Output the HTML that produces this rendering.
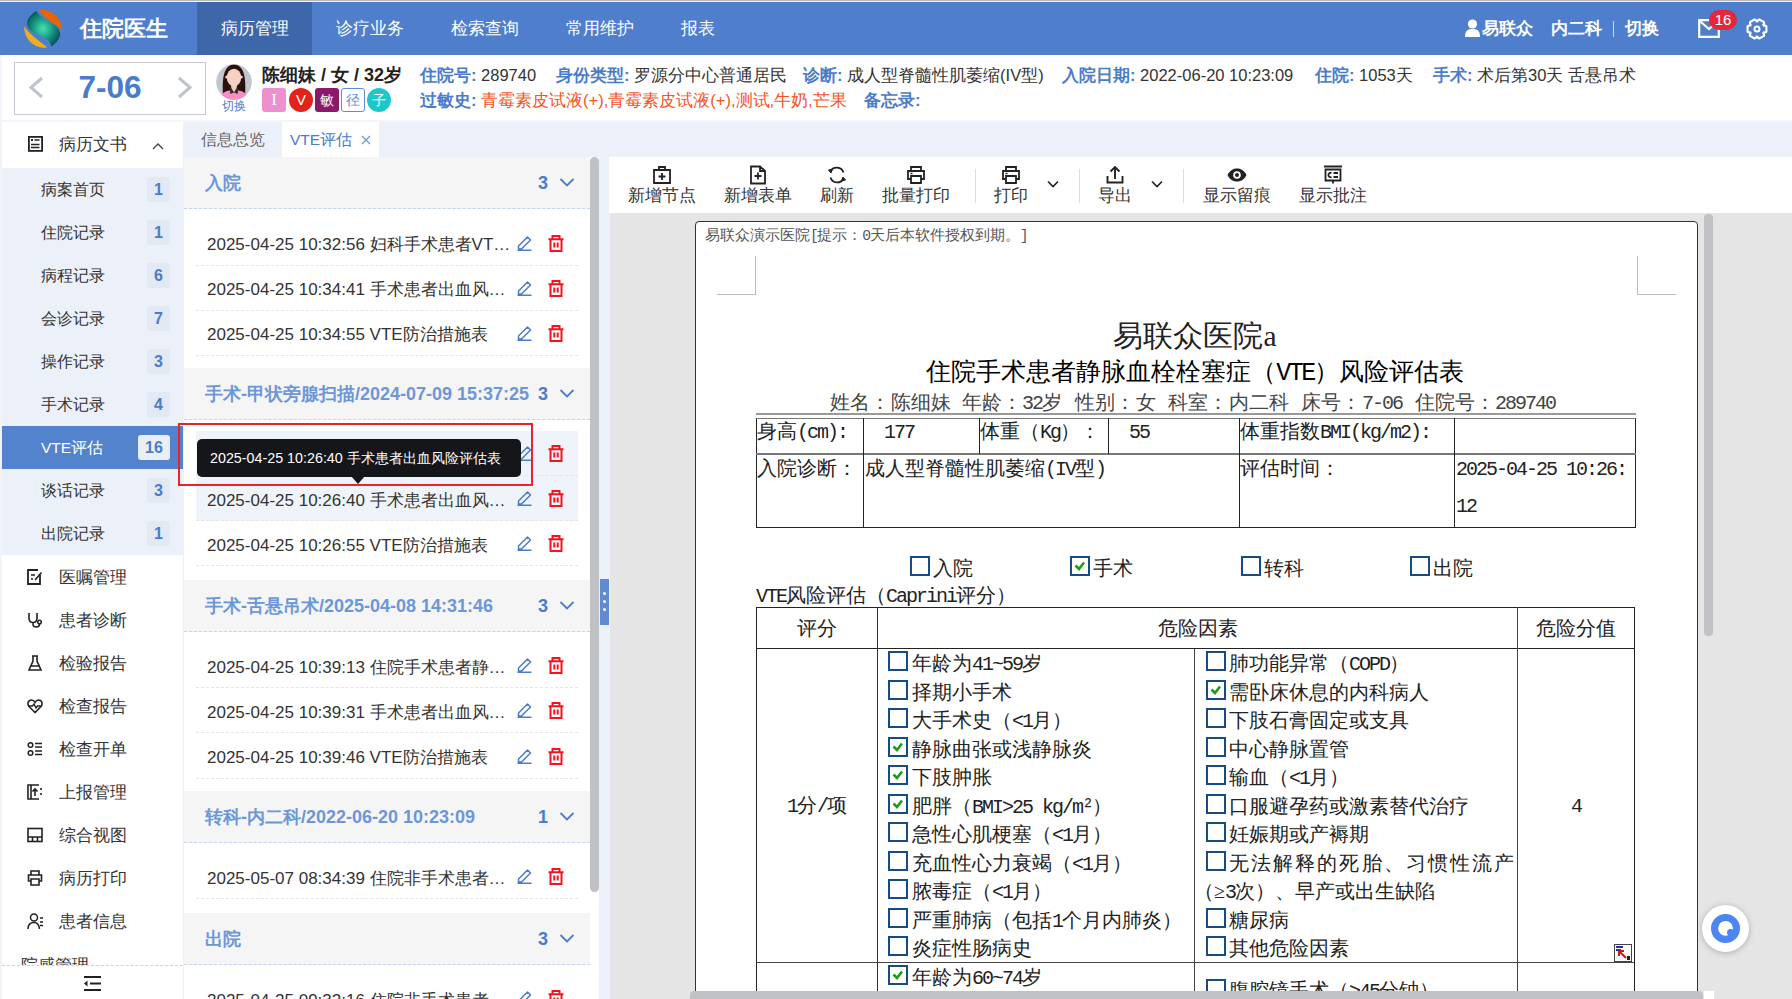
<!DOCTYPE html>
<html><head><meta charset="utf-8">
<style>
*{box-sizing:border-box;margin:0;padding:0}
html,body{width:1792px;height:999px;overflow:hidden;background:#eef2f9;font-family:"Liberation Sans",sans-serif;color:#333;position:relative}
.a{position:absolute;white-space:nowrap}
#topline{left:0;top:0;width:1792px;height:1px;background:#b9b9b9}
#hdr{left:0;top:2px;width:1792px;height:53px;background:#4f7fcc}
.nav{top:0;height:53px;line-height:53px;color:#fff;font-size:17px;text-align:center}
.hr{top:0;line-height:53px;color:#fff;font-size:17px;font-weight:bold}
#pbar{left:2px;top:55px;width:1790px;height:65px;background:#fff}
.pi{font-size:16.5px;color:#333;line-height:20px}
.lbl{color:#4a7cc9;font-weight:bold}
.tag{top:33px;width:24px;height:24px;line-height:24px;text-align:center;color:#fff;font-size:15px}
/* sidebar */
#side{left:2px;top:122px;width:181px;height:877px;background:#fff;overflow:hidden}
.sm{left:0;width:181px;height:43px;line-height:43px;font-size:15.5px;color:#333;background:#ecf1f9}
.sm span.t{position:absolute;left:39px;top:0}
.sm span.b{position:absolute;left:145px;top:9px;width:23px;height:25px;line-height:25px;text-align:center;background:#e2e8f4;color:#4a7cc9;font-weight:bold;border-radius:3px;font-size:16px}
.mi{left:0;width:181px;height:43px;line-height:43px;font-size:17px;color:#333}
.mi span.t{position:absolute;left:57px;top:1px}
.mi svg{position:absolute;left:25px;top:14px}
/* tabs */
#tabs{left:184px;top:122px;width:1608px;height:35px;background:#ecf1f9}
/* list */
#list{left:184px;top:157px;width:406px;height:842px;background:#fff;overflow:hidden}
.gh{left:0;width:406px;height:52px;background:#f5f5f5;border-bottom:1px dashed #c5d4ee}
.gh .t{position:absolute;left:21px;top:0;line-height:52px;font-size:18px;font-weight:bold;color:#6b97da}
.gh .n{position:absolute;left:354px;top:0;line-height:52px;font-size:18px;font-weight:bold;color:#4a7cc9}
.gh svg{position:absolute;left:375px;top:20px}
.it{left:12px;width:382px;height:45px;border-bottom:1px dashed #e6e6e6}
.it .t{position:absolute;left:11px;top:1.5px;line-height:45px;font-size:17px;color:#333}
.it .e{position:absolute;left:321px;top:15px}
.it .d{position:absolute;left:352px;top:14px}
/* toolbar */
#tool{left:609px;top:157px;width:1183px;height:56px;background:#fff}
.tb{top:0;height:56px;text-align:center;font-size:17px;color:#333}
.tb svg{position:absolute;left:50%;margin-left:-10px;top:8px}
.tb span{position:absolute;left:0;right:0;top:29px;line-height:20px}
.sep{top:12px;width:1px;height:34px;background:#dcdcdc}
#doc{left:610px;top:213px;width:1182px;height:786px;background:#e5e5e5;overflow:hidden}
#page{left:85px;top:8px;width:1003px;height:900px;background:#fff;border:1.5px solid #333;border-radius:4px 4px 0 0}
.ser{font-family:"Liberation Serif",serif}
.mono{font-family:"Liberation Mono",monospace}
.dt{font-family:"Liberation Serif",serif}
.dt .m{font-family:"Liberation Mono",monospace;letter-spacing:-0.1em}
.cb{position:absolute;width:20px;height:20px;border:2.7px solid #154c85;background:#fff}
</style></head><body>
<svg width="0" height="0" style="position:absolute"><defs>
<symbol id="chev" viewBox="0 0 16 11"><path d="M1.5,2 L8,8.5 L14.5,2" fill="none" stroke="#4a7cc9" stroke-width="1.8"/></symbol>
<symbol id="ied" viewBox="0 0 15 15"><path d="M1.5,13 V10 L10.5,1 L13.5,4 L4.5,13 Z M0.5,14.2 H14.5" fill="none" stroke="#4a7cc9" stroke-width="1.5" stroke-linejoin="round"/></symbol>
<symbol id="idel" viewBox="0 0 16 17"><path d="M0.5,4.3 H15.5 M4.5,4.3 V1 H11.5 V4.3 M2.5,4.3 V16 H13.5 V4.3 M6.3,7.5 V12.5 M9.7,7.5 V12.5" fill="none" stroke="#f5141e" stroke-width="2"/></symbol>
</defs></svg>
<div class="a" id="topline"></div>
<div class="a" id="hdr">
  <svg class="a" style="left:24px;top:7px" width="40" height="40" viewBox="0 0 40 40">
    <defs><radialGradient id="lg" cx="0.48" cy="0.5" r="0.55"><stop offset="0" stop-color="#43e3b6"/><stop offset="0.55" stop-color="#17967e"/><stop offset="1" stop-color="#04535b"/></radialGradient></defs>
    <path d="M15,1 C25,-0.5 37.5,7 38.3,21.2 C33,15.5 20,10.5 15,1 Z" fill="#ec6300"/>
    <path d="M0.2,17 C5,25.5 15,31 23.2,38.6 C11,40 0,31 0.2,17 Z" fill="#f0ad1c"/>
    <path d="M12.5,2 C15,8 24,12 30,15.5 C36,19.5 37,25 35.5,28 C34,32 30.5,35.5 27,37.5 C27,32 22,29 16,26.5 C10,24 5.5,22 3.5,17 C2,12 5,6 12.5,2 Z" fill="url(#lg)"/>
  </svg>
  <div class="a" style="left:80px;top:0;height:53px;line-height:53px;color:#fff;font-size:22px;font-weight:bold">住院医生</div>
  <div class="a nav" style="left:197px;width:115px;background:#3e67a9">病历管理</div>
  <div class="a nav" style="left:312px;width:115px">诊疗业务</div>
  <div class="a nav" style="left:427px;width:115px">检索查询</div>
  <div class="a nav" style="left:542px;width:115px">常用维护</div>
  <div class="a nav" style="left:657px;width:82px">报表</div>
  <svg class="a" style="left:1465px;top:17px" width="15" height="18" viewBox="0 0 15 18"><circle cx="7.5" cy="5" r="4.6" fill="#fff"/><path d="M0,18 C0,11 3,10 7.5,10 C12,10 15,11 15,18 Z" fill="#fff"/></svg>
  <div class="a hr" style="left:1482px">易联众</div>
  <div class="a hr" style="left:1551px">内二科</div>
  <div class="a" style="left:1613px;top:19px;width:1px;height:16px;background:#c9d7ef"></div>
  <div class="a hr" style="left:1625px">切换</div>
  <svg class="a" style="left:1698px;top:17px" width="22" height="19" viewBox="0 0 22 19"><path d="M1.2,1.2 H20.8 V17.8 H1.2 Z M1.2,1.5 L11,10 L20.8,1.5" fill="none" stroke="#fff" stroke-width="2.2"/></svg>
  <div class="a" style="left:1709px;top:8px;width:28px;height:20px;border-radius:10px;background:#e2283a;color:#fff;font-size:15px;line-height:20px;text-align:center">16</div>
  <svg class="a" style="left:1745.5px;top:15.5px" width="22" height="22" viewBox="0 0 22 22"><path d="M17.27,6.71 L20.42,8.29 L20.42,13.71 L17.27,15.29 L17.85,14.29 L18.05,17.80 L13.36,20.51 L10.42,18.58 L11.58,18.58 L8.64,20.51 L3.95,17.80 L4.15,14.29 L4.73,15.29 L1.58,13.71 L1.58,8.29 L4.73,6.71 L4.15,7.71 L3.95,4.20 L8.64,1.49 L11.58,3.42 L10.42,3.42 L13.36,1.49 L18.05,4.20 L17.85,7.71 Z" fill="none" stroke="#fff" stroke-width="2.1" stroke-linejoin="round"/><circle cx="11" cy="11" r="2.5" fill="none" stroke="#fff" stroke-width="2"/></svg>
</div>
<div class="a" style="left:0;top:55px;width:1792px;height:67px;background:#f4f5f8"></div>
<div class="a" id="pbar"><div class="a" style="left:-2px;top:0;width:1792px;height:65px">
  <div class="a" style="left:14px;top:7px;width:192px;height:53px;border:1.5px solid #c6c9d1"></div>
  <svg class="a" style="left:28px;top:21px" width="16" height="23" viewBox="0 0 16 23"><path d="M14,2 L3,11.5 L14,21" fill="none" stroke="#bfc3cb" stroke-width="3"/></svg>
  <svg class="a" style="left:177px;top:21px" width="16" height="23" viewBox="0 0 16 23"><path d="M2,2 L13,11.5 L2,21" fill="none" stroke="#bfc3cb" stroke-width="3"/></svg>
  <div class="a" style="left:60px;top:6px;width:100px;height:53px;line-height:53px;text-align:center;font-size:31.5px;font-weight:bold;color:#4a7cc9">7-06</div>
  <svg class="a" style="left:216px;top:8.5px" width="36" height="36" viewBox="0 0 36 36">
    <defs><clipPath id="cc"><circle cx="18" cy="18" r="17.8"/></clipPath></defs>
    <circle cx="18" cy="18" r="17.8" fill="#c2c6ce"/>
    <g clip-path="url(#cc)">
      <path d="M7,32 C6,16 7,1 18,0.5 C29,1 30,16 29,32 Z" fill="#2a120c"/>
      <path d="M3,36 C4,30 9,26 18,26 C27,26 32,30 33,36 Z" fill="#f78fc4"/>
      <rect x="15.2" y="19" width="5.6" height="8" fill="#f6c8bd"/>
      <path d="M13.5,25 L15.3,24 L18,28.5 L20.7,24 L22.5,25 L21.5,30 L18,28.5 L14.5,30 Z" fill="#2f2f2f"/>
      <circle cx="10.8" cy="13" r="1.6" fill="#f8d0c4"/><circle cx="25.2" cy="13" r="1.6" fill="#f8d0c4"/>
      <ellipse cx="18" cy="13.5" rx="7.2" ry="8.8" fill="#f8d0c4"/>
    </g>
  </svg>
  <div class="a" style="left:222px;top:44px;font-size:12px;color:#4a7cc9;line-height:14px">切换</div>
  <div class="a" style="left:262px;top:9px;font-size:18px;font-weight:bold;color:#222;line-height:22px">陈细妹 / 女 / 32岁</div>
  <div class="a tag" style="left:262px;background:#f08fcf;border-radius:3px;font-family:'Liberation Serif',serif;font-size:17px">I</div>
  <div class="a tag" style="left:289px;background:#e0241b;border-radius:50%">V</div>
  <div class="a tag" style="left:315px;background:#8b1a6b;border-radius:3px;font-size:14px">敏</div>
  <div class="a tag" style="left:341px;background:#fff;border:1px solid #5f8ed6;color:#5f8ed6;border-radius:3px;font-size:14px;line-height:22px">径</div>
  <div class="a tag" style="left:367px;background:#1ec8c8;border-radius:50%;font-size:14px">子</div>
  <div class="a pi" style="left:420px;top:10px"><span class="lbl">住院号:</span> 289740</div>
  <div class="a pi" style="left:556px;top:10px"><span class="lbl">身份类型:</span> 罗源分中心普通居民</div>
  <div class="a pi" style="left:803px;top:10px"><span class="lbl">诊断:</span> 成人型脊髓性肌萎缩(IV型)</div>
  <div class="a pi" style="left:1062px;top:10px"><span class="lbl">入院日期:</span> 2022-06-20 10:23:09</div>
  <div class="a pi" style="left:1315px;top:10px"><span class="lbl">住院:</span> 1053天</div>
  <div class="a pi" style="left:1433px;top:10px"><span class="lbl">手术:</span> 术后第30天 舌悬吊术</div>
  <div class="a pi" style="left:420px;top:35px"><span class="lbl">过敏史:</span> <span style="color:#f5541f">青霉素皮试液(+),青霉素皮试液(+),测试,牛奶,芒果</span></div>
  <div class="a pi" style="left:864px;top:35px"><span class="lbl">备忘录:</span></div>
</div></div>

<!-- SIDEBAR -->
<div class="a" style="left:0;top:122px;width:2px;height:877px;background:#f1f3f7"></div>
<div class="a" id="side">
  <svg class="a" style="left:25.5px;top:14px" width="15" height="16" viewBox="0 0 15 16"><rect x="0.9" y="0.9" width="13.2" height="14" fill="none" stroke="#222" stroke-width="1.8"/><rect x="3" y="3" width="2" height="2" fill="#222"/><path d="M6.5,4 H11.5 M3,8.5 H11.5 M3,11.5 H11.5" stroke="#222" stroke-width="1.3"/></svg>
  <div class="a" style="left:57px;top:0;line-height:46px;font-size:17px;color:#333">病历文书</div>
  <svg class="a" style="left:150px;top:20px" width="12" height="8" viewBox="0 0 12 8"><path d="M1,7 L6,2 L11,7" fill="none" stroke="#444" stroke-width="1.4"/></svg>
  <div class="a sm" style="top:46px"><span class="t">病案首页</span><span class="b">1</span></div>
  <div class="a sm" style="top:89px"><span class="t">住院记录</span><span class="b">1</span></div>
  <div class="a sm" style="top:132px"><span class="t">病程记录</span><span class="b">6</span></div>
  <div class="a sm" style="top:175px"><span class="t">会诊记录</span><span class="b">7</span></div>
  <div class="a sm" style="top:218px"><span class="t">操作记录</span><span class="b">3</span></div>
  <div class="a sm" style="top:261px"><span class="t">手术记录</span><span class="b">4</span></div>
  <div class="a sm" style="top:304px;background:#5383cd;color:#fff"><span class="t">VTE评估</span><span class="b" style="left:136px;width:32px;background:#e9eef8">16</span></div>
  <div class="a sm" style="top:347px"><span class="t">谈话记录</span><span class="b">3</span></div>
  <div class="a sm" style="top:390px"><span class="t">出院记录</span><span class="b">1</span></div>
  <div class="a mi" style="top:433px"><svg width="16" height="16" viewBox="0 0 16 16"><path d="M13,6 V15 H1 V1 H11" fill="none" stroke="#222" stroke-width="1.8"/><path d="M4,6 H8 M4,10 H6 M8,11 L14.5,3.5" stroke="#222" stroke-width="1.6" fill="none"/></svg><span class="t">医嘱管理</span></div>
  <div class="a mi" style="top:476px"><svg width="16" height="16" viewBox="0 0 16 16"><path d="M2,1 V6 C2,9 4,10.5 6,10.5 C8,10.5 10,9 10,6 V1 M6,10.5 V12 C6,14 7.5,15 9.5,15 C11.5,15 12.5,13.5 12.5,11.5" fill="none" stroke="#222" stroke-width="1.6"/><circle cx="12.5" cy="10" r="1.8" fill="none" stroke="#222" stroke-width="1.5"/></svg><span class="t">患者诊断</span></div>
  <div class="a mi" style="top:519px"><svg width="16" height="16" viewBox="0 0 16 16"><path d="M5,1 H11 M6,1.5 V6 L2,15 H14 L10,6 V1.5 M4,11 H12" fill="none" stroke="#222" stroke-width="1.6"/></svg><span class="t">检验报告</span></div>
  <div class="a mi" style="top:562px"><svg width="16" height="16" viewBox="0 0 16 16"><path d="M8,14.5 L2,8.5 C0,6 1,2 4.5,2 C6.5,2 7.5,3.5 8,4.5 C8.5,3.5 9.5,2 11.5,2 C15,2 16,6 14,8.5 Z" fill="none" stroke="#222" stroke-width="1.6"/><path d="M2,8 H5.5 L7,6 L9,10 L10.5,8 H14" fill="none" stroke="#222" stroke-width="1.4"/></svg><span class="t">检查报告</span></div>
  <div class="a mi" style="top:605px"><svg width="16" height="16" viewBox="0 0 16 16"><circle cx="3.5" cy="4" r="2.3" fill="none" stroke="#222" stroke-width="1.5"/><circle cx="3.5" cy="12" r="2.3" fill="none" stroke="#222" stroke-width="1.5"/><path d="M8,2.5 H15 M8,6 H15 M8,10 H15 M8,13.5 H15" stroke="#222" stroke-width="1.5"/></svg><span class="t">检查开单</span></div>
  <div class="a mi" style="top:648px"><svg width="16" height="16" viewBox="0 0 16 16"><path d="M12,1 H1 V15 H12 M4,1 V15" fill="none" stroke="#222" stroke-width="1.6"/><path d="M8,12 V5 M5.5,7.5 L8,5 L10.5,7.5 M14,4 V6 M14,9 V11" fill="none" stroke="#222" stroke-width="1.6"/></svg><span class="t">上报管理</span></div>
  <div class="a mi" style="top:691px"><svg width="16" height="16" viewBox="0 0 16 16"><rect x="1" y="1.5" width="14" height="13" fill="none" stroke="#222" stroke-width="1.6"/><path d="M1,10 H15 M5.5,10 V14.5 M10.5,10 V14.5" stroke="#222" stroke-width="1.6"/></svg><span class="t">综合视图</span></div>
  <div class="a mi" style="top:734px"><svg width="16" height="16" viewBox="0 0 16 16"><path d="M4,5 V1 H12 V5 M4,11 H1.5 V5 H14.5 V11 H12 M4,9 H12 V15 H4 Z" fill="none" stroke="#222" stroke-width="1.6"/></svg><span class="t">病历打印</span></div>
  <div class="a mi" style="top:777px"><svg width="18" height="17" viewBox="0 0 18 17"><circle cx="7" cy="4.5" r="3.5" fill="none" stroke="#222" stroke-width="1.5"/><path d="M1,16 C1,11 4,9.5 7,9.5 C10,9.5 12,11 12.5,16" fill="none" stroke="#222" stroke-width="1.5"/><path d="M13,5 H16 M13,9 H16 M13,12.5 H16" stroke="#222" stroke-width="1.5"/></svg><span class="t">患者信息</span></div>
  <div class="a" style="left:19px;top:826px;width:100px;height:17px;overflow:hidden"><div style="position:absolute;left:0;top:-0.5px;line-height:36px;font-size:17px;color:#333">院感管理</div></div>
  <div class="a" style="left:0;top:843px;width:181px;height:34px;background:#fff;border-top:1px dashed #c5d4ee"></div>
  <svg class="a" style="left:82px;top:854px" width="17" height="15" viewBox="0 0 17 15"><path d="M0,1 H17 M6,7.5 H17 M0,14 H17" stroke="#222" stroke-width="2"/><path d="M0,7.5 L3.5,4.5 V10.5 Z" fill="#222"/></svg>
</div>

<!-- TABS -->
<div class="a" id="tabs">
  <div class="a" style="left:17px;top:0;line-height:35px;font-size:15.5px;color:#666">信息总览</div>
  <div class="a" style="left:98px;top:0;width:97px;height:35px;background:#fff"></div>
  <div class="a" style="left:106px;top:0;line-height:35px;font-size:15.5px;color:#4a7cc9">VTE评估</div>
  <svg class="a" style="left:177px;top:13px" width="10" height="10" viewBox="0 0 10 10"><path d="M1,1 L9,9 M9,1 L1,9" stroke="#6b97da" stroke-width="1.3"/></svg>
</div>

<!-- LIST -->
<div class="a" id="list">
  <div class="a gh" style="top:0px"><span class="t">入院</span><span class="n">3</span><svg width="16" height="11"><use href="#chev"/></svg></div>
  <div class="a it" style="top:63.8px"><span class="t">2025-04-25 10:32:56 妇科手术患者VT…</span><svg class="e" width="15" height="15"><use href="#ied"/></svg><svg class="d" width="16" height="17"><use href="#idel"/></svg></div>
  <div class="a it" style="top:108.7px"><span class="t">2025-04-25 10:34:41 手术患者出血风…</span><svg class="e" width="15" height="15"><use href="#ied"/></svg><svg class="d" width="16" height="17"><use href="#idel"/></svg></div>
  <div class="a it" style="top:153.5px"><span class="t">2025-04-25 10:34:55 VTE防治措施表</span><svg class="e" width="15" height="15"><use href="#ied"/></svg><svg class="d" width="16" height="17"><use href="#idel"/></svg></div>
  <div class="a gh" style="top:210.5px"><span class="t">手术-甲状旁腺扫描/2024-07-09 15:37:25</span><span class="n">3</span><svg width="16" height="11"><use href="#chev"/></svg></div>
  <div class="a it" style="top:274px;background:#eff3fa"><span class="t">2025-04-25 10:26:40 手术患者出血风…</span><svg class="e" width="15" height="15"><use href="#ied"/></svg><svg class="d" width="16" height="17"><use href="#idel"/></svg></div>
  <div class="a it" style="top:319px;background:#eff3fa"><span class="t">2025-04-25 10:26:40 手术患者出血风…</span><svg class="e" width="15" height="15"><use href="#ied"/></svg><svg class="d" width="16" height="17"><use href="#idel"/></svg></div>
  <div class="a it" style="top:364px"><span class="t">2025-04-25 10:26:55 VTE防治措施表</span><svg class="e" width="15" height="15"><use href="#ied"/></svg><svg class="d" width="16" height="17"><use href="#idel"/></svg></div>
  <div class="a gh" style="top:423px"><span class="t">手术-舌悬吊术/2025-04-08 14:31:46</span><span class="n">3</span><svg width="16" height="11"><use href="#chev"/></svg></div>
  <div class="a it" style="top:486px"><span class="t">2025-04-25 10:39:13 住院手术患者静…</span><svg class="e" width="15" height="15"><use href="#ied"/></svg><svg class="d" width="16" height="17"><use href="#idel"/></svg></div>
  <div class="a it" style="top:531px"><span class="t">2025-04-25 10:39:31 手术患者出血风…</span><svg class="e" width="15" height="15"><use href="#ied"/></svg><svg class="d" width="16" height="17"><use href="#idel"/></svg></div>
  <div class="a it" style="top:576.8px"><span class="t">2025-04-25 10:39:46 VTE防治措施表</span><svg class="e" width="15" height="15"><use href="#ied"/></svg><svg class="d" width="16" height="17"><use href="#idel"/></svg></div>
  <div class="a gh" style="top:634px"><span class="t">转科-内二科/2022-06-20 10:23:09</span><span class="n">1</span><svg width="16" height="11"><use href="#chev"/></svg></div>
  <div class="a it" style="top:697px"><span class="t">2025-05-07 08:34:39 住院非手术患者…</span><svg class="e" width="15" height="15"><use href="#ied"/></svg><svg class="d" width="16" height="17"><use href="#idel"/></svg></div>
  <div class="a gh" style="top:756px"><span class="t">出院</span><span class="n">3</span><svg width="16" height="11"><use href="#chev"/></svg></div>
  <div class="a it" style="top:819px"><span class="t">2025-04-25 09:32:16 住院非手术患者…</span><svg class="e" width="15" height="15"><use href="#ied"/></svg><svg class="d" width="16" height="17"><use href="#idel"/></svg></div>
</div>


<!-- list scrollbar & splitter -->
<div class="a" style="left:590px;top:157px;width:9px;height:842px;background:#fff"></div>
<div class="a" style="left:590px;top:157px;width:9px;height:735px;background:#bfc1c5;border-radius:4.5px 4.5px 4.5px 4.5px"></div>
<div class="a" style="left:599px;top:157px;width:10px;height:842px;background:#ecf1f9"></div>
<div class="a" style="left:600px;top:579px;width:9px;height:46px;background:#5f8bd3"></div>
<div class="a" style="left:602.5px;top:591.5px;width:3.6px;height:3.6px;border-radius:50%;background:#fff"></div>
<div class="a" style="left:602.5px;top:599.5px;width:3.6px;height:3.6px;border-radius:50%;background:#fff"></div>
<div class="a" style="left:602.5px;top:607.5px;width:3.6px;height:3.6px;border-radius:50%;background:#fff"></div>
<!-- tooltip -->
<div class="a" style="left:197px;top:439px;width:324px;height:38px;background:#15161a;border-radius:5px"></div>
<div class="a" style="left:351px;top:476px;width:0;height:0;border-left:7.5px solid transparent;border-right:7.5px solid transparent;border-top:8px solid #15161a"></div>
<div class="a" style="left:210px;top:439px;line-height:38px;font-size:14.3px;color:#fff">2025-04-25 10:26:40 手术患者出血风险评估表</div>
<div class="a" style="left:178px;top:423px;width:355px;height:63px;border:2.5px solid #e8242b"></div>

<!-- TOOLBAR -->
<div class="a" id="tool">
  <div class="a tb" style="left:19px;width:68px"><svg width="20" height="20" viewBox="0 0 20 20"><path d="M2,5 H18 V18 H2 Z M7,5 V2 H13 V5 M10,8 V15 M6.5,11.5 H13.5" fill="none" stroke="#222" stroke-width="1.8"/></svg><span>新增节点</span></div>
  <div class="a tb" style="left:115px;width:68px"><svg width="20" height="20" viewBox="0 0 20 20"><path d="M3,1.5 H12 L17,6 V18.5 H3 Z M12,1.5 V6 H17 M10,7.5 V14.5 M6.5,11 H13.5" fill="none" stroke="#222" stroke-width="1.8"/></svg><span>新增表单</span></div>
  <div class="a tb" style="left:211px;width:34px"><svg width="20" height="20" viewBox="0 0 20 20"><path d="M16.5,7.5 A7,7 0 0 0 3.5,6.5 M3.5,12.5 A7,7 0 0 0 16.5,13.5" fill="none" stroke="#222" stroke-width="1.8"/><path d="M1.5,5 L5.5,4 L4,8 Z M18.5,15 L14.5,16 L16,12 Z" fill="#222" stroke="#222" stroke-width="1"/></svg><span>刷新</span></div>
  <div class="a tb" style="left:273px;width:68px"><svg width="20" height="20" viewBox="0 0 20 20"><path d="M5,6 V2 H15 V6 M5,14 H2 V6 H18 V14 H15 M5,11 H15 V18 H5 Z" fill="none" stroke="#222" stroke-width="1.8"/><path d="M4.5,8.5 H6.5" stroke="#222" stroke-width="1.5"/></svg><span>批量打印</span></div>
  <div class="a sep" style="left:366px"></div>
  <div class="a tb" style="left:385px;width:34px"><svg width="20" height="20" viewBox="0 0 20 20"><path d="M5,6 V2 H15 V6 M5,14 H2 V6 H18 V14 H15 M5,11 H15 V18 H5 Z" fill="none" stroke="#222" stroke-width="1.8"/><path d="M4.5,8.5 H6.5" stroke="#222" stroke-width="1.5"/></svg><span>打印</span></div>
  <svg class="a" style="left:438px;top:23px" width="12" height="8" viewBox="0 0 12 8"><path d="M1,1.5 L6,6.5 L11,1.5" fill="none" stroke="#222" stroke-width="1.6"/></svg>
  <div class="a sep" style="left:470px"></div>
  <div class="a tb" style="left:489px;width:34px"><svg width="20" height="20" viewBox="0 0 20 20"><path d="M10,14 V2.5 M5.5,6.5 L10,2 L14.5,6.5 M2.5,11 V17.5 H17.5 V11" fill="none" stroke="#222" stroke-width="1.9"/></svg><span>导出</span></div>
  <svg class="a" style="left:542px;top:23px" width="12" height="8" viewBox="0 0 12 8"><path d="M1,1.5 L6,6.5 L11,1.5" fill="none" stroke="#222" stroke-width="1.6"/></svg>
  <div class="a sep" style="left:574px"></div>
  <div class="a tb" style="left:594px;width:68px"><svg width="20" height="20" viewBox="0 0 20 20"><path d="M0.5,10 C3,5 6.5,3.5 10,3.5 C13.5,3.5 17,5 19.5,10 C17,15 13.5,16.5 10,16.5 C6.5,16.5 3,15 0.5,10 Z" fill="#222"/><circle cx="10" cy="10" r="3.8" fill="#fff"/><circle cx="10" cy="10" r="2" fill="#222"/></svg><span>显示留痕</span></div>
  <div class="a tb" style="left:690px;width:68px"><svg width="20" height="20" viewBox="0 0 20 20"><path d="M1,1.5 H19 M2.5,4.5 H17.5 V15.5 H2.5 Z M10,15.5 V18.5" fill="none" stroke="#222" stroke-width="1.8"/><path d="M10.5,8 H15 M10.5,12 H15" stroke="#222" stroke-width="1.8"/><path d="M8.5,8 A2.2,2.2 0 1 0 8.5,12" fill="none" stroke="#222" stroke-width="1.8"/></svg><span>显示批注</span></div>
</div>

<!-- DOC -->
<div class="a" id="doc">
</div>
<!--DOC START-->
<div class="a" style="left:695px;top:221px;width:1003px;height:800px;background:#fff;border:1.5px solid #333;border-radius:4px 4px 0 0"></div>
<div class="a" style="left:717px;top:294px;width:39px;height:1px;background:#bbb"></div><div class="a" style="left:755px;top:256px;width:1px;height:39px;background:#bbb"></div>
<div class="a" style="left:1637px;top:294px;width:39px;height:1px;background:#bbb"></div><div class="a" style="left:1637px;top:256px;width:1px;height:39px;background:#bbb"></div>
<div class="a dt" style="left:705px;top:226px;font-size:14.67px;color:#555;line-height:18px">易联众演示医院<span class="m">[</span>提示：<span class="m">0</span>天后本软件授权到期。<span class="m">]</span></div>
<div class="a dt" style="left:1095px;top:318px;width:200px;text-align:center;font-size:29.5px;line-height:36px;color:#222">易联众医院a</div>
<div class="a dt" style="left:895px;top:357px;width:600px;text-align:center;font-size:25px;line-height:30px;color:#000;font-weight:500">住院手术患者静脉血栓栓塞症（<span class="m">VTE</span>）风险评估表</div>
<div class="a dt" style="left:830px;top:390px;font-size:20px;line-height:24px;color:#444">姓名：</div>
<div class="a dt" style="left:891px;top:390px;font-size:20px;line-height:24px;color:#444">陈细妹</div>
<div class="a dt" style="left:962px;top:390px;font-size:20px;line-height:24px;color:#444">年龄：</div>
<div class="a dt" style="left:1022px;top:390px;font-size:20px;line-height:24px;color:#444"><span class="m">32</span>岁</div>
<div class="a dt" style="left:1075px;top:390px;font-size:20px;line-height:24px;color:#444">性别：</div>
<div class="a dt" style="left:1136px;top:390px;font-size:20px;line-height:24px;color:#444">女</div>
<div class="a dt" style="left:1168px;top:390px;font-size:20px;line-height:24px;color:#444">科室：</div>
<div class="a dt" style="left:1229px;top:390px;font-size:20px;line-height:24px;color:#444">内二科</div>
<div class="a dt" style="left:1301px;top:390px;font-size:20px;line-height:24px;color:#444">床号：</div>
<div class="a dt" style="left:1362px;top:390px;font-size:20px;line-height:24px;color:#444"><span class="m">7-06</span></div>
<div class="a dt" style="left:1415px;top:390px;font-size:20px;line-height:24px;color:#444">住院号：</div>
<div class="a dt" style="left:1495px;top:390px;font-size:20px;line-height:24px;color:#444"><span class="m">289740</span></div>
<div class="a" style="left:756px;top:413px;width:880px;height:1.5px;background:#999"></div>
<div class="a" style="left:756px;top:417.5px;width:880px;height:110px;border:1.2px solid #222;border-top-color:#777"></div>
<div class="a" style="left:756px;top:453px;width:880px;height:1.5px;background:#777"></div>
<div class="a" style="left:863px;top:418px;width:1.2px;height:109px;background:#222"></div>
<div class="a" style="left:979px;top:418px;width:1.2px;height:36px;background:#222"></div>
<div class="a" style="left:1108px;top:418px;width:1.2px;height:36px;background:#222"></div>
<div class="a" style="left:1239px;top:418px;width:1.2px;height:109px;background:#222"></div>
<div class="a" style="left:1454px;top:418px;width:1.2px;height:109px;background:#222"></div>
<div class="a dt" style="left:757px;top:418px;font-size:20px;line-height:26px;color:#222">身高<span class="m">(cm):</span></div>
<div class="a dt" style="left:884px;top:418px;font-size:20px;line-height:26px;color:#222"><span class="m">177</span></div>
<div class="a dt" style="left:980px;top:418px;font-size:20px;line-height:26px;color:#222">体重（<span class="m">Kg</span>）：</div>
<div class="a dt" style="left:1129px;top:418px;font-size:20px;line-height:26px;color:#222"><span class="m">55</span></div>
<div class="a dt" style="left:1240px;top:418px;font-size:20px;line-height:26px;color:#222">体重指数<span class="m">BMI(kg/m2):</span></div>
<div class="a dt" style="left:757px;top:455px;font-size:20px;line-height:26px;color:#222">入院诊断：</div>
<div class="a dt" style="left:865px;top:455px;font-size:20px;line-height:26px;color:#222">成人型脊髓性肌萎缩<span class="m">(IV</span>型<span class="m">)</span></div>
<div class="a dt" style="left:1240px;top:455px;font-size:20px;line-height:26px;color:#222">评估时间：</div>
<div class="a dt" style="left:1456px;top:455px;font-size:20px;line-height:26px;color:#222"><span class="m">2025-04-25&nbsp;10:26:</span></div>
<div class="a dt" style="left:1456px;top:492px;font-size:20px;line-height:26px;color:#222"><span class="m">12</span></div>
<div class="cb" style="left:910px;top:556px"></div>
<div class="a dt" style="left:933px;top:556px;font-size:20px;line-height:24px;color:#222">入院</div>
<div class="cb" style="left:1070px;top:556px"><svg width="16" height="16" viewBox="0 0 16 16" style="position:absolute;left:0;top:0"><path d="M3.5,7.5 L7,11 L12,4.5" fill="none" stroke="#1a9e1a" stroke-width="2.6"/></svg></div>
<div class="a dt" style="left:1093px;top:556px;font-size:20px;line-height:24px;color:#222">手术</div>
<div class="cb" style="left:1241px;top:556px"></div>
<div class="a dt" style="left:1264px;top:556px;font-size:20px;line-height:24px;color:#222">转科</div>
<div class="cb" style="left:1410px;top:556px"></div>
<div class="a dt" style="left:1433px;top:556px;font-size:20px;line-height:24px;color:#222">出院</div>
<div class="a dt" style="left:756px;top:582.5px;font-size:20px;line-height:24px;color:#222"><span class="m">VTE</span>风险评估（<span class="m">Caprini</span>评分）</div>
<div class="a" style="left:756px;top:607px;width:878.5px;height:400px;border:1.2px solid #222"></div>
<div class="a" style="left:756px;top:647.8px;width:879px;height:1.2px;background:#222"></div>
<div class="a" style="left:756px;top:962px;width:878px;height:1.2px;background:#444"></div>
<div class="a" style="left:877.2px;top:607px;width:1.2px;height:400px;background:#333"></div>
<div class="a" style="left:1517.2px;top:607px;width:1.2px;height:400px;background:#444"></div>
<div class="a" style="left:1194px;top:649px;width:1.2px;height:400px;background:#444"></div>
<div class="a dt" style="left:757px;top:615px;width:120px;text-align:center;font-size:20px;line-height:26px;color:#222">评分</div>
<div class="a dt" style="left:878px;top:615px;width:639px;text-align:center;font-size:20px;line-height:26px;color:#222">危险因素</div>
<div class="a dt" style="left:1518px;top:615px;width:116px;text-align:center;font-size:20px;line-height:26px;color:#222">危险分值</div>
<div class="cb" style="left:888px;top:651.0px"></div>
<div class="a dt" style="left:912px;top:651.0px;font-size:20px;line-height:24px;color:#222">年龄为<span class="m">41~59</span>岁</div>
<div class="cb" style="left:888px;top:679.5px"></div>
<div class="a dt" style="left:912px;top:679.5px;font-size:20px;line-height:24px;color:#222">择期小手术</div>
<div class="cb" style="left:888px;top:708.0px"></div>
<div class="a dt" style="left:912px;top:708.0px;font-size:20px;line-height:24px;color:#222">大手术史（<span class="m">&lt;1</span>月）</div>
<div class="cb" style="left:888px;top:736.6px"><svg width="16" height="16" viewBox="0 0 16 16" style="position:absolute;left:0;top:0"><path d="M3.5,7.5 L7,11 L12,4.5" fill="none" stroke="#1a9e1a" stroke-width="2.6"/></svg></div>
<div class="a dt" style="left:912px;top:736.6px;font-size:20px;line-height:24px;color:#222">静脉曲张或浅静脉炎</div>
<div class="cb" style="left:888px;top:765.1px"><svg width="16" height="16" viewBox="0 0 16 16" style="position:absolute;left:0;top:0"><path d="M3.5,7.5 L7,11 L12,4.5" fill="none" stroke="#1a9e1a" stroke-width="2.6"/></svg></div>
<div class="a dt" style="left:912px;top:765.1px;font-size:20px;line-height:24px;color:#222">下肢肿胀</div>
<div class="cb" style="left:888px;top:793.6px"><svg width="16" height="16" viewBox="0 0 16 16" style="position:absolute;left:0;top:0"><path d="M3.5,7.5 L7,11 L12,4.5" fill="none" stroke="#1a9e1a" stroke-width="2.6"/></svg></div>
<div class="a dt" style="left:912px;top:793.6px;font-size:20px;line-height:24px;color:#222">肥胖（<span class="m">BMI&gt;25&nbsp;kg/m²</span>）</div>
<div class="cb" style="left:888px;top:822.1px"></div>
<div class="a dt" style="left:912px;top:822.1px;font-size:20px;line-height:24px;color:#222">急性心肌梗塞（<span class="m">&lt;1</span>月）</div>
<div class="cb" style="left:888px;top:850.6px"></div>
<div class="a dt" style="left:912px;top:850.6px;font-size:20px;line-height:24px;color:#222">充血性心力衰竭（<span class="m">&lt;1</span>月）</div>
<div class="cb" style="left:888px;top:879.2px"></div>
<div class="a dt" style="left:912px;top:879.2px;font-size:20px;line-height:24px;color:#222">脓毒症（<span class="m">&lt;1</span>月）</div>
<div class="cb" style="left:888px;top:907.7px"></div>
<div class="a dt" style="left:912px;top:907.7px;font-size:20px;line-height:24px;color:#222">严重肺病（包括<span class="m">1</span>个月内肺炎）</div>
<div class="cb" style="left:888px;top:936.2px"></div>
<div class="a dt" style="left:912px;top:936.2px;font-size:20px;line-height:24px;color:#222">炎症性肠病史</div>
<div class="cb" style="left:1206px;top:651.0px"></div>
<div class="a dt" style="left:1229px;top:651.0px;font-size:20px;line-height:24px;color:#222">肺功能异常（<span class="m">COPD</span>）</div>
<div class="cb" style="left:1206px;top:679.5px"><svg width="16" height="16" viewBox="0 0 16 16" style="position:absolute;left:0;top:0"><path d="M3.5,7.5 L7,11 L12,4.5" fill="none" stroke="#1a9e1a" stroke-width="2.6"/></svg></div>
<div class="a dt" style="left:1229px;top:679.5px;font-size:20px;line-height:24px;color:#222">需卧床休息的内科病人</div>
<div class="cb" style="left:1206px;top:708.0px"></div>
<div class="a dt" style="left:1229px;top:708.0px;font-size:20px;line-height:24px;color:#222">下肢石膏固定或支具</div>
<div class="cb" style="left:1206px;top:736.6px"></div>
<div class="a dt" style="left:1229px;top:736.6px;font-size:20px;line-height:24px;color:#222">中心静脉置管</div>
<div class="cb" style="left:1206px;top:765.1px"></div>
<div class="a dt" style="left:1229px;top:765.1px;font-size:20px;line-height:24px;color:#222">输血（<span class="m">&lt;1</span>月）</div>
<div class="cb" style="left:1206px;top:793.6px"></div>
<div class="a dt" style="left:1229px;top:793.6px;font-size:20px;line-height:24px;color:#222">口服避孕药或激素替代治疗</div>
<div class="cb" style="left:1206px;top:822.1px"></div>
<div class="a dt" style="left:1229px;top:822.1px;font-size:20px;line-height:24px;color:#222">妊娠期或产褥期</div>
<div class="cb" style="left:1206px;top:850.6px"></div>
<div class="a dt" style="left:1229px;top:850.6px;font-size:20px;line-height:24px;color:#222;letter-spacing:2.1px">无法解释的死胎、习惯性流产</div>
<div class="a dt" style="left:1194px;top:879.2px;font-size:20px;line-height:24px;color:#222">（≥<span class="m">3</span>次）、早产或出生缺陷</div>
<div class="cb" style="left:1206px;top:907.7px"></div>
<div class="a dt" style="left:1229px;top:907.7px;font-size:20px;line-height:24px;color:#222">糖尿病</div>
<div class="cb" style="left:1206px;top:936.2px"></div>
<div class="a dt" style="left:1229px;top:936.2px;font-size:20px;line-height:24px;color:#222">其他危险因素</div>
<div class="a dt" style="left:757px;top:793px;width:120px;text-align:center;font-size:20px;line-height:24px;color:#222"><span class="m">1</span>分<span class="m">/</span>项</div>
<div class="a dt" style="left:1518px;top:793px;width:116px;text-align:center;font-size:20px;line-height:24px;color:#222"><span class="m">4</span></div>
<svg class="a" style="left:1614px;top:944px" width="18" height="18" viewBox="0 0 18 18"><rect x="0.5" y="0.5" width="17" height="17" fill="#fff" stroke="#444"/><path d="M2,3 H9 M2,6 H7" stroke="#223399" stroke-width="2"/><path d="M5,7 L12,14 M5,7 V12 M5,7 H10" stroke="#e01010" stroke-width="2"/><path d="M13,12 H16 V16 H13 Z" fill="#222"/></svg>
<div class="cb" style="left:888px;top:965px"><svg width="16" height="16" viewBox="0 0 16 16" style="position:absolute;left:0;top:0"><path d="M3.5,7.5 L7,11 L12,4.5" fill="none" stroke="#1a9e1a" stroke-width="2.6"/></svg></div>
<div class="a dt" style="left:912px;top:965px;font-size:20px;line-height:24px;color:#222">年龄为<span class="m">60~74</span>岁</div>
<div class="cb" style="left:1206px;top:979px"></div>
<div class="a dt" style="left:1229px;top:978px;font-size:20px;line-height:24px;color:#222">腹腔镜手术（<span class="m">&gt;45</span>分钟）</div>
<!--DOC END-->
<!-- right scrollbar & h scrollbar -->
<div class="a" style="left:1704px;top:214px;width:9px;height:422px;background:#c1c2c5;border-radius:4px"></div>
<div class="a" style="left:690px;top:991px;width:1013px;height:8px;background:#c1c2c5;border-radius:4px 4px 0 0"></div>
<!-- floating button -->
<div class="a" style="left:1702px;top:905px;width:47px;height:47px;border-radius:50%;background:#fff;box-shadow:0 1px 6px rgba(0,0,0,0.25)"></div>
<svg class="a" style="left:1710px;top:913px" width="31" height="31" viewBox="0 0 31 31"><circle cx="15.5" cy="15.5" r="14.5" fill="#4b86f2"/><circle cx="15.5" cy="15.3" r="7.4" fill="#fff"/><circle cx="20.6" cy="19.6" r="3.6" fill="#4b86f2"/></svg>
<div class="a" style="left:1704px;top:991px;width:10px;height:8px;background:#fff"></div>

</body></html>
